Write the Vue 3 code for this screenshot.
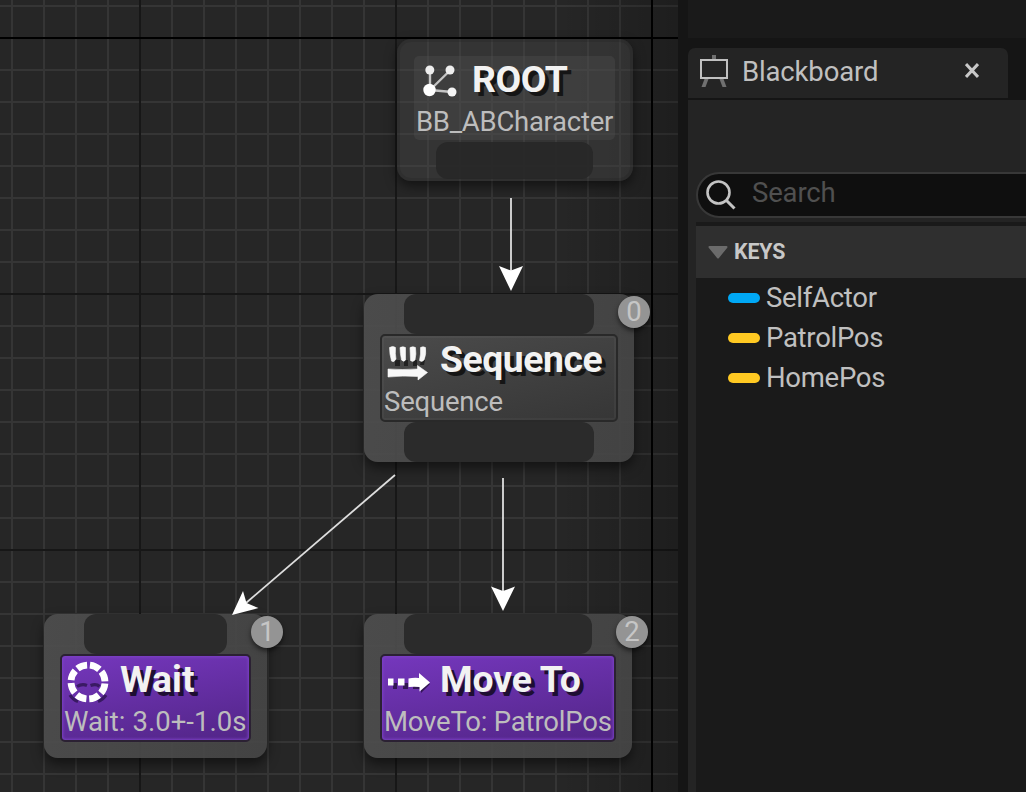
<script setup>
const nodes = [
  { id: 'root', title: 'ROOT', detail: 'BB_ABCharacter', bottom: true },
  { id: 'sequence', title: 'Sequence', detail: 'Sequence', index: 0, top: true, bottom: true },
  { id: 'wait', title: 'Wait', detail: 'Wait: 3.0+-1.0s', index: 1, top: true, task: true },
  { id: 'move', title: 'Move To', detail: 'MoveTo: PatrolPos', index: 2, top: true, task: true },
]
const keys = [
  { name: 'SelfActor', kind: 'object' },
  { name: 'PatrolPos', kind: 'vector' },
  { name: 'HomePos', kind: 'vector' },
]
</script>

<template>
  <div class="editor">
    <main class="graph">
      <svg class="grid" width="678" height="792">
        <defs>
          <pattern id="minor" x="11" y="5" width="32" height="32" patternUnits="userSpaceOnUse">
            <path d="M0 1H32M1 0V32" stroke="#353535" stroke-width="2" />
          </pattern>
        </defs>
        <rect width="678" height="792" fill="url(#minor)" />
        <path d="M140 0V792M396 0V792M0 294H678M0 550H678" stroke="#171717" stroke-width="2" />
        <path d="M0 38H678M652 0V792" stroke="#000" stroke-width="2" />
      </svg>
      <div class="vignette"></div>

      <section v-for="n in nodes" :key="n.id" class="node" :class="[n.id, { task: n.task }]">
        <div v-if="n.top" class="pin top"></div>
        <div class="body">
          <div class="heading">
            <svg v-if="n.id === 'root'" class="icon" width="44" height="44" viewBox="0 0 44 44">
              <path d="M34 12.500L14 32V12.500M14 32L36 34" fill="none" stroke="#c4c4c4" stroke-width="2.400" />
              <circle cx="13.500" cy="32" r="6.200" fill="#fff" />
              <circle cx="13.800" cy="12" r="4.500" fill="#eee" />
              <circle cx="34" cy="12" r="4.500" fill="#eee" />
              <circle cx="36" cy="34" r="4.500" fill="#f4f4f4" />
            </svg>
            <svg v-else-if="n.id === 'sequence'" class="icon" width="44" height="44" viewBox="0 0 44 44">
              <g fill="#151515" opacity=".75">
                <path d="M11 22h5v6h-5zM20 22h4v6h-4zM29 22h4v6h-4zM37 22h4l-1 5h-4z" />
              </g>
              <path fill="#f8f8f8" stroke="#f8f8f8" stroke-width=".6" d="M5.500 9.500Q9 7.500 11.500 9.500Q11 16 12 21Q10 25 7.500 23Q5.500 16 5.500 9.500zM16 9.500Q19 8 21.500 9.500V22Q20 24.500 17.500 22Q16 15 16 9.500zM26 9.500Q29 8 31.500 9.500Q32.500 16 31 22Q29 24.500 26.500 22.500zM36.500 9.500Q39 8 41.500 9.500Q42.500 16 40 22Q38 24.500 35.500 22.500Q37 16 36.500 9.500zM4 31Q18 32 33.500 31V27.500L43.500 34.500 34 42V38.500Q18 37.500 4 39z" />
            </svg>
            <svg v-else-if="n.id === 'wait'" class="icon" width="44" height="44" viewBox="0 0 44 44">
              <path d="M13 28.500q5-3 10-1M26.500 27.500q6-2 9 1M6 37q3 5 8 6.500M34 43.500q5-2 8-6.500" fill="none" stroke="#29134b" stroke-width="3.200" opacity=".75" />
              <circle cx="24" cy="24" r="17" fill="none" stroke="#fff" stroke-width="6.800" stroke-dasharray="10.400 2.952" stroke-dashoffset="-1.500" />
            </svg>
            <svg v-else class="icon" width="48" height="44" viewBox="0 0 48 44">
              <path fill="#25103f" opacity=".8" d="M9 25h4v6H9zM19 25h5v6h-5zM29 26h11v-3l6 3-9 9v-4h-8z" />
              <path fill="#fff" d="M4 20.500h5.500v7H4zM14 20.500h6.500v7H14zM24.500 20.500q5-1 10.500-.5V15L46 24.500 35.500 33.500V29q-5-.5-11 0z" />
            </svg>
            <h2>{{ n.title }}</h2>
          </div>
          <p>{{ n.detail }}</p>
        </div>
        <div v-if="n.bottom" class="pin bottom"></div>
        <span v-if="n.index !== undefined" class="badge">{{ n.index }}</span>
      </section>

      <svg class="wires" width="678" height="792">
        <g stroke="#dedede" stroke-width="1.800" fill="none">
          <path d="M511 198V272M503 478V592" />
          <path d="M395 475L246 603" />
        </g>
        <g fill="#fff">
          <path d="M499 266L511 270.500 523 266 511 291z" />
          <path d="M491 586.500L503 591 515 586.500 503 611z" />
          <path d="M232 615L243 591 246.500 603 258.500 608z" />
        </g>
      </svg>
    </main>

    <aside class="side">
      <div class="strip"></div>
      <div class="tabs">
        <div class="tab">
          <svg width="30" height="34" viewBox="0 0 30 34">
            <path d="M13 1h4v4h-4zM5.500 25h4L6.500 33h-4zM20.500 25h4l3 8h-4z" fill="#707070" />
            <rect x="2" y="6" width="26" height="18" fill="none" stroke="#c0c0c0" stroke-width="2" />
          </svg>
          <span class="label">Blackboard</span>
          <svg class="close" width="14" height="16" viewBox="0 0 14 16">
            <path d="M1 1L13 14M13 1L1 14" stroke="#c8c8c8" stroke-width="3" />
          </svg>
        </div>
      </div>
      <div class="panel">
        <div class="search">
          <svg width="34" height="34" viewBox="0 0 34 34">
            <circle cx="14.500" cy="14.500" r="11" fill="none" stroke="#c4c4c4" stroke-width="2.600" />
            <path d="M22 22L30.500 30.500" stroke="#c4c4c4" stroke-width="3" />
          </svg>
          <span>Search</span>
        </div>
        <div class="list">
          <div class="category">
            <svg width="20" height="13" viewBox="0 0 20 13">
              <path d="M1.500 1h17L10 11.500z" fill="#6b6b6b" stroke="#6b6b6b" stroke-width="2" stroke-linejoin="round" />
            </svg>
            <span>KEYS</span>
          </div>
          <div v-for="k in keys" :key="k.name" class="key">
            <i :class="k.kind"></i><span>{{ k.name }}</span>
          </div>
        </div>
      </div>
    </aside>
  </div>
</template>

<style>
body { margin: 0; background: #151515; overflow: hidden; }
</style>

<style scoped>
.editor { display: flex; width: 1026px; height: 792px; gap: 10px; overflow: hidden; background: #151515; font-family: Roboto, "Liberation Sans", sans-serif; font-size: 27.5px; letter-spacing: -.15px; color: #c0c0c0; }
.graph { position: relative; flex: 0 0 678px; height: 792px; background: #262626; overflow: hidden; }
.grid, .wires { position: absolute; left: 0; top: 0; }
.vignette { position: absolute; inset: 0; background: linear-gradient(to right, rgba(0,0,0,0) 560px, rgba(0,0,0,.22) 678px); }

.node { position: absolute; box-sizing: border-box; display: flex; flex-direction: column; border-radius: 14px; background: linear-gradient(100deg, rgba(78,78,78,.92), rgba(70,70,70,.9)); box-shadow: 0 6px 12px rgba(0,0,0,.5); padding: 0 16px; }
.root { left: 397px; top: 39px; width: 236px; height: 142px; padding: 17px 18px 0 17px; background: rgba(74,74,74,.4); box-shadow: 0 5px 12px rgba(0,0,0,.5), inset 0 0 0 3px rgba(30,30,30,.25); }
.sequence { left: 364px; top: 294px; width: 270px; height: 168px; }
.wait { left: 44px; top: 614px; width: 223px; height: 144px; }
.move { left: 364px; top: 614px; width: 268px; height: 144px; }
.pin { height: 40px; margin: 0 24px; border-radius: 12px; background: rgba(43,43,43,.98); flex: none; }
.root .pin { height: 37px; margin: 2px 22px 0; background: rgba(39,39,39,.9); }
.body { box-sizing: border-box; height: 88px; flex: none; border: 2px solid #292929; border-radius: 5px; background: linear-gradient(165deg, #4b4b4b, #363636); box-shadow: inset 0 0 0 2px rgba(255,255,255,.035); padding: 2px; }
.root .body { height: 84px; border: 0; padding: 2px; background: rgba(80,80,80,.36); box-shadow: none; }
.task .body { background: linear-gradient(170deg, #7537bd, #522587); box-shadow: inset 0 0 3px 1px #7c42c6; border-color: #2b2133; }
.heading { display: flex; height: 44px; gap: 12px; }
.icon { flex: none; width: 44px; height: 44px; overflow: visible; filter: blur(.6px); }
.move .icon { width: 48px; margin-right: -4px; }
h2 { margin: 0; font-size: 37.33px; line-height: 42px; letter-spacing: -.45px; font-weight: 700; color: #f2f2f2; white-space: nowrap; text-shadow: 4px 4px 0 #151515; }
.wait h2 { letter-spacing: 0; }
.move h2 { letter-spacing: -.15px; }
.task h2 { text-shadow: 4px 4px 0 #1e0e33; }
p { margin: 0; font-size: 27.5px; line-height: 40px; letter-spacing: -.2px; white-space: nowrap; color: #bdbdbd; }
.root p { letter-spacing: -.27px; }
.wait p { letter-spacing: .05px; }
.badge { position: absolute; right: -16px; top: 2px; width: 32px; height: 32px; border-radius: 50%; background: #949494; box-shadow: 0 3px 5px rgba(0,0,0,.55); color: #c6c6c6; text-align: center; line-height: 32px; font-size: 27.5px; }

.side { flex: 1; min-width: 0; display: flex; flex-direction: column; }
.strip { height: 38px; background: #1a1a1a; flex: none; }
.tabs { padding-top: 10px; height: 50px; flex: none; }
.tab { box-sizing: border-box; width: 320px; height: 50px; border-radius: 7px 7px 0 0; background: #242424; display: flex; align-items: center; padding: 0 29px 4px 11px; }
.label { margin-left: 13px; }
.close { margin-left: auto; }
.panel { margin-top: 2px; flex: 1; background: #242424; padding: 72px 0 0 8px; }
.search { box-sizing: border-box; height: 46px; width: 360px; border: 2px solid #383838; border-radius: 23px; background: #0f0f0f; display: flex; align-items: center; padding-left: 6px; color: #505050; }
.search span { margin-left: 14px; line-height: 38px; padding-bottom: 4px; }
.list { margin-top: 4px; height: 570px; background: #1a1a1a; border-top: 4px solid #1a1a1a; box-sizing: border-box; }
.category { height: 52px; background: #2f2f2f; display: flex; align-items: center; gap: 6px; padding-left: 12px; font-size: 21.33px; font-weight: 700; color: #c8c8c8; }
.category span { padding-bottom: 2px; }
.key { height: 40px; display: flex; align-items: center; padding-left: 32px; gap: 6px; letter-spacing: -.27px; }
.key span { padding-bottom: 1px; }
.key i { width: 32px; height: 10px; border-radius: 5px; }
.object { background: #00a8f5; }
.vector { background: #ffc922; }
</style>
